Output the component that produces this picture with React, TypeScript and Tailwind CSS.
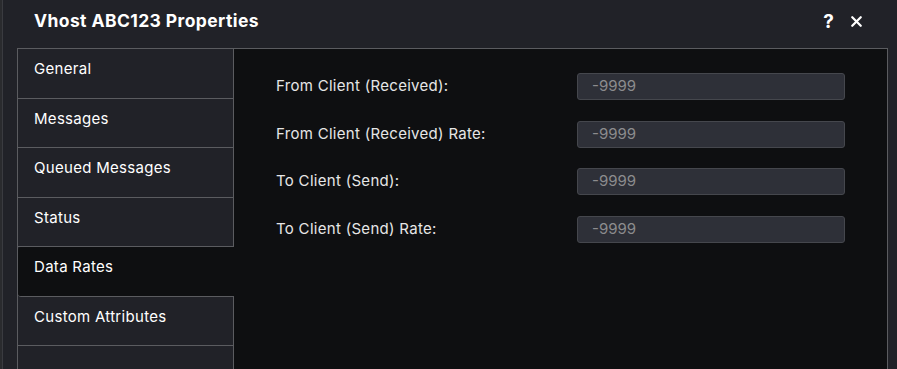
import { X } from "lucide-react";

const tabs = ["General", "Messages", "Queued Messages", "Status", "Data Rates", "Custom Attributes", ""];

const rows = [
  "From Client (Received):",
  "From Client (Received) Rate:",
  "To Client (Send):",
  "To Client (Send) Rate:",
];

export default function App() {
  const active = "Data Rates";

  return (
    <div
      className="flex h-[369px] w-[897px] overflow-hidden bg-[#212228] text-white"
      style={{ fontFamily: "Inter, 'Noto Sans', sans-serif" }}
    >
      {/* sliver of page behind the dialog */}
      <div className="w-[3px] shrink-0 bg-[#2a2b2e] border-r border-[#3a3b40]" />

      <div className="flex min-w-0 flex-1 flex-col">
        <div className="flex h-[48px] shrink-0 items-center justify-between pb-[6px] pl-[31px] pr-[32px]">
          <h1 className="text-[17.5px] font-bold tracking-[0.4px]">Vhost ABC123 Properties</h1>
          <div className="flex items-center gap-[14px]">
            <span className="text-[19px] font-bold leading-none">?</span>
            <X size={17} strokeWidth={3.2} />
          </div>
        </div>

        <div className="ml-[14px] mr-[9px] flex flex-1 border-l border-t border-r border-[#5b5c60]">
          <div className="flex w-[216px] shrink-0 flex-col border-r border-[#5b5c60]">
            {tabs.map((t, i) => (
              <div
                key={i}
                className={`h-[49.5px] shrink-0 border-b pl-[16px] pt-[9px] text-[15px] tracking-[0.3px] ${
                  t === active
                    ? "rounded-l-[3px] border-[#5b5c60] bg-[#0e0f11] -mr-px"
                    : "border-[#5b5c60] bg-[#212228]"
                }`}
              >
                {t}
              </div>
            ))}
          </div>

          <div className="flex-1 bg-[#0e0f11] pl-[42px] pr-[42px] pt-[24px]">
            <div className="flex flex-col gap-[20.5px]">
              {rows.map((r) => (
                <div key={r} className="flex items-center justify-between">
                  <span className="text-[15px] tracking-[0.3px] text-[#e6e6e6]">{r}</span>
                  <div className="flex h-[27px] w-[268px] items-center rounded-[3px] border border-[#45474d] bg-[#2e3038] pl-[14px] text-[15px] text-[#8c8c8e]">
                    -9999
                  </div>
                </div>
              ))}
            </div>
          </div>
        </div>
      </div>
    </div>
  );
}
